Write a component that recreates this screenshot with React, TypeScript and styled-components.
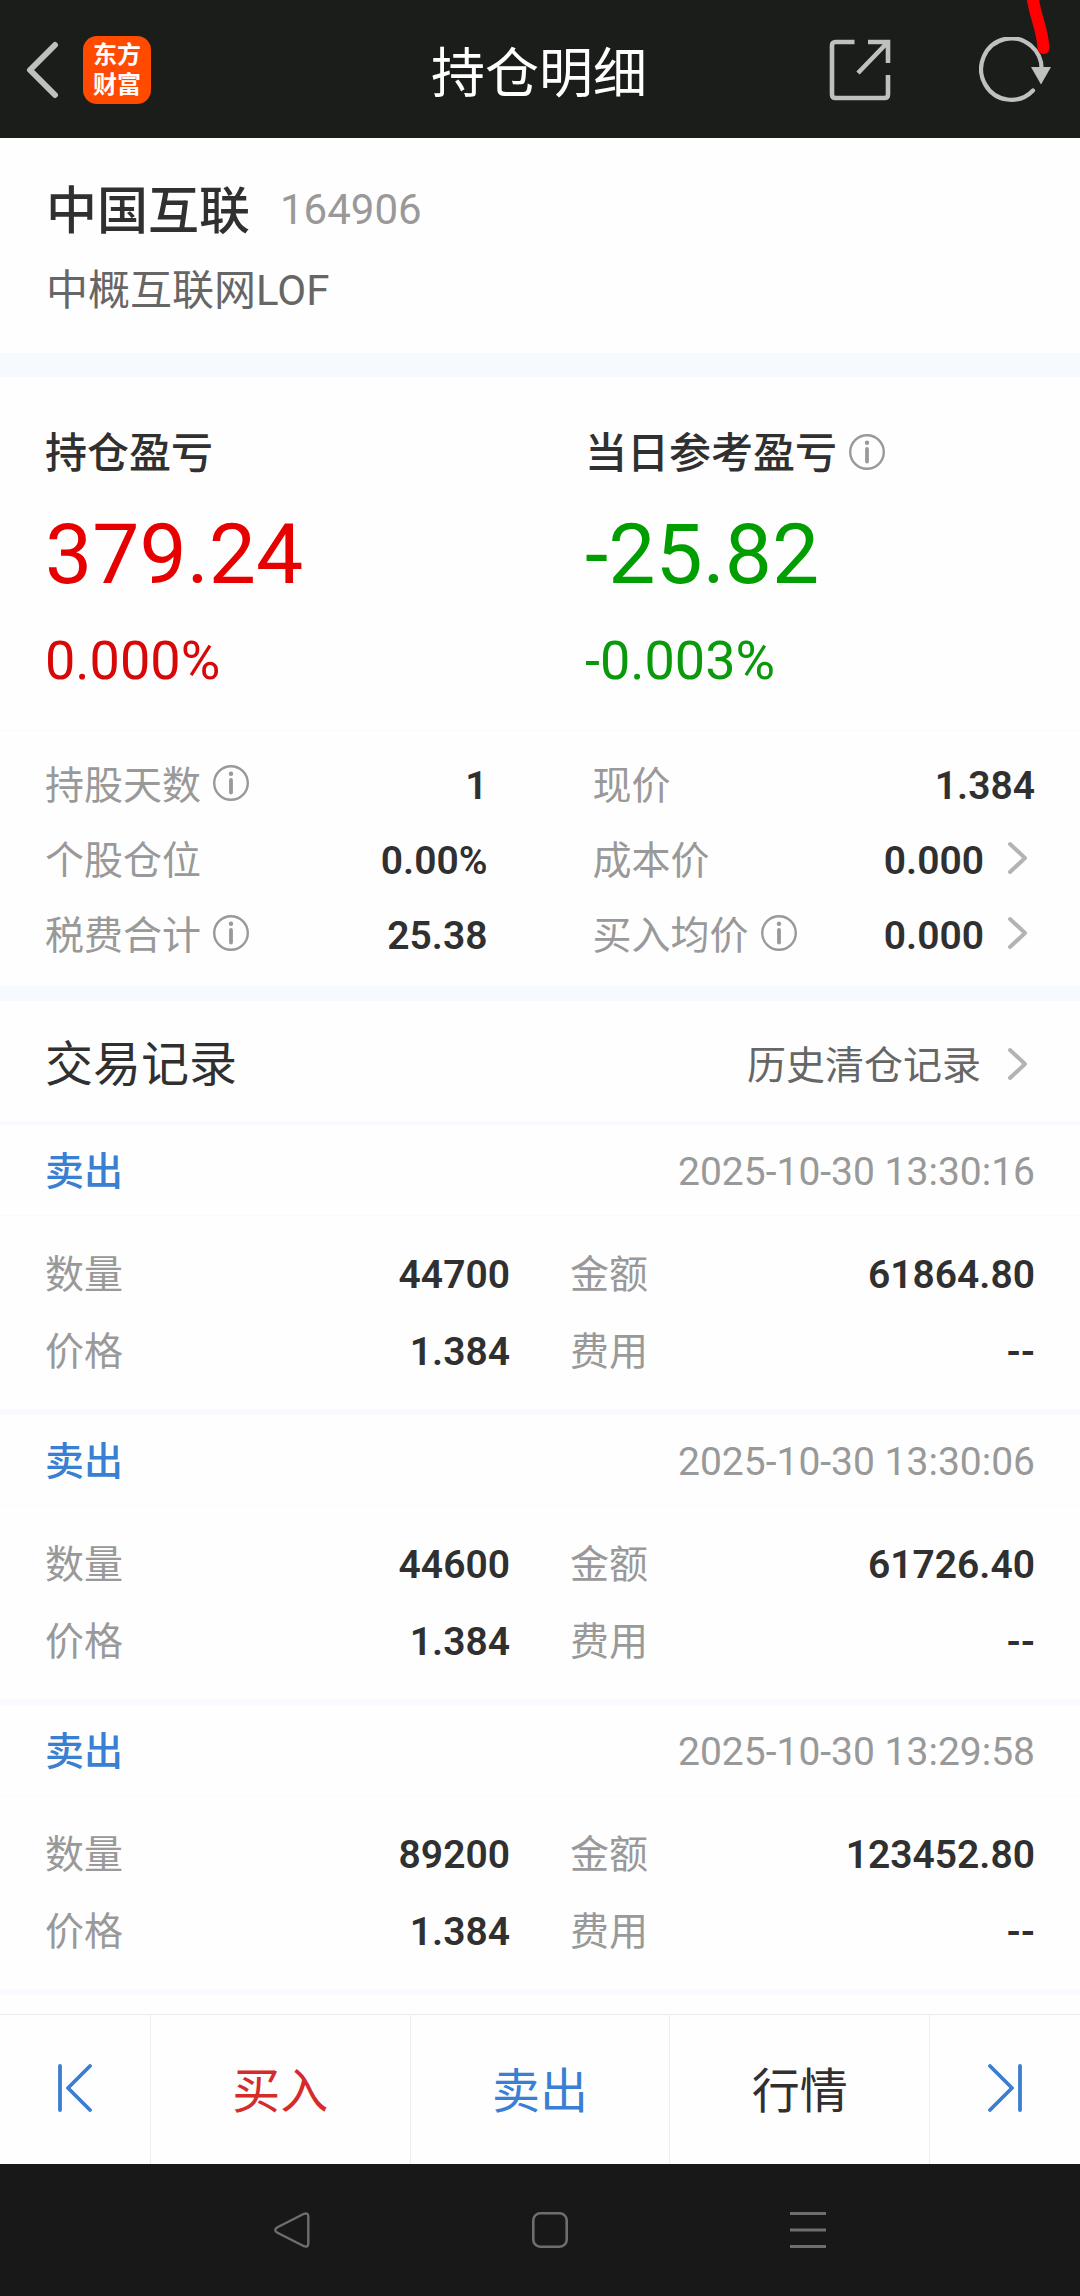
import React from "react";
import styled, { createGlobalStyle } from "styled-components";

const GlobalStyle = createGlobalStyle`
  * { box-sizing: border-box; }
  body {
    margin: 0;
    background: #fefefe;
    color: #303030;
    font-family: Roboto, "Noto Sans CJK SC", sans-serif;
    font-size: 39px;
    line-height: 60px;
  }
  h1, h2, p, dl, dd, dt { margin: 0; font-weight: 400; }
  svg { display: block; flex: none; }
`;

const Page = styled.div`
  min-height: 100vh;
  display: flex;
  flex-direction: column;
`;

const PlainButton = styled.button`
  display: flex;
  align-items: center;
  justify-content: center;
  padding: 0;
  border: 0;
  background: none;
  color: inherit;
  font: inherit;
  cursor: pointer;
`;

/* Top bar */

const TopBar = styled.header`
  position: relative;
  display: grid;
  grid-template-columns: 1fr auto 1fr;
  align-items: center;
  height: 138px;
  padding: 2px 28px 0 26px;
  background: #1a1d1a;
  color: #c0c0c0;
`;

const BarSide = styled.div<{ $end?: boolean }>`
  display: flex;
  align-items: center;
  justify-content: ${(p) => (p.$end ? "flex-end" : "flex-start")};
  gap: ${(p) => (p.$end ? "88px" : "24px")};
`;

const BarTitle = styled.h1`
  padding-top: 10px;
  color: #fff;
  font-size: 54px;
  line-height: 72px;
`;

const BrandLogo = styled.div`
  width: 68px;
  height: 68px;
  padding-top: 4px;
  border-radius: 14px;
  background: #ff4a00;
  color: #fff;
  font-size: 24px;
  font-weight: 700;
  line-height: 30px;
  text-align: center;
`;

const PenMark = styled.svg`
  position: absolute;
  top: 0;
  right: 24px;
`;

/* Sections */

const Band = styled.div<{ $size: number; $soft?: boolean }>`
  flex: none;
  height: ${(p) => p.$size}px;
  background: ${(p) => (p.$soft ? "#f9faff" : "#f6faff")};
`;

const HairLine = styled.div`
  height: 1px;
  background: #fafafa;
`;

const Content = styled.main`
  flex: 1;
`;

const Identity = styled.section`
  padding: 38px 46px 32px;
`;

const NameRow = styled.div`
  display: flex;
  align-items: center;
  gap: 30px;
  margin-bottom: 13px;
`;

const FundName = styled.h2`
  && { font-weight: 500; }
  font-size: 51px;
  line-height: 72px;
`;

const FundCode = styled.span`
  padding-bottom: 4px;
  color: #999;
  font-size: 42px;
`;

const FullName = styled.p`
  color: #666;
  font-size: 42px;
`;

const ProfitGrid = styled.section`
  display: grid;
  grid-template-columns: 1fr 1fr;
  column-gap: 90px;
  padding: 47px 45px 39px;
`;

const ProfitTitle = styled.h2`
  && { font-weight: 500; }
  display: flex;
  align-items: center;
  gap: 12px;
  margin-bottom: 23px;
  font-size: 42px;
`;

const ProfitAmount = styled.p<{ $up: boolean }>`
  margin-bottom: 28px;
  color: ${(p) => (p.$up ? "#e60000" : "#009e00")};
  font-size: 84px;
  line-height: 96px;
`;

const ProfitRate = styled.p<{ $up: boolean }>`
  color: ${(p) => (p.$up ? "#d90808" : "#0a990a")};
  font-size: 54px;
`;

const StatGrid = styled.dl`
  display: grid;
  grid-template-columns: 1fr 1fr;
  column-gap: 105px;
  padding: 17px 45px 13px;
`;

const StatRow = styled.div<{ $height: number }>`
  display: flex;
  align-items: center;
  justify-content: space-between;
  height: ${(p) => p.$height}px;
`;

const Label = styled.dt`
  display: flex;
  align-items: center;
  gap: 12px;
  color: #999;
`;

const Value = styled.dd`
  display: flex;
  align-items: center;
  gap: 15px;
  && { font-weight: 600; }
`;

const IconButton = styled(PlainButton)`
  height: 36px;
  margin-bottom: 5px;
  color: #999;
`;

const RecordsHead = styled.div`
  display: flex;
  align-items: center;
  justify-content: space-between;
  height: 120px;
  padding: 7px 45px 0;
`;

const RecordsTitle = styled.h2`
  font-size: 48px;
`;

const HistoryLink = styled.a`
  display: flex;
  align-items: center;
  gap: 18px;
  padding-top: 3px;
  color: #666;
  text-decoration: none;

  svg { margin-bottom: 5px; }
`;

const RecordHead = styled.div`
  display: flex;
  align-items: center;
  justify-content: space-between;
  height: 90px;
  padding: 4px 45px 0;
`;

const Side = styled.span`
  color: #397fd3;
  font-weight: 500;
`;

const Time = styled.time`
  color: #999;
`;

const RecordGrid = styled.dl`
  display: grid;
  grid-template-columns: 1fr 1fr;
  column-gap: 60px;
  padding: 20px 45px 19px;
`;

/* Bottom bars */

const ActionBar = styled.nav`
  display: grid;
  grid-template-columns: 151px 1fr 1fr 1fr 150px;
  height: 150px;
  border-top: 1px solid #ebebeb;
`;

const Action = styled(PlainButton)<{ $color: string }>`
  padding-top: 5px;
  border-right: 1px solid #ededed;
  color: ${(p) => p.$color};
  font-size: 48px;

  &:last-child { border-right: 0; }
  svg { margin-bottom: 9px; }
`;

const SystemBar = styled.div`
  display: flex;
  align-items: center;
  justify-content: center;
  gap: 222px;
  height: 132px;
  padding-left: 20px;
  background: #181818;
  color: #6e6e6e;
`;

const InfoIcon = () => (
  <svg width="36" height="36" viewBox="0 0 36 36" fill="none" stroke="currentColor">
    <circle cx="18" cy="18" r="16.8" strokeWidth="2.4" />
    <path d="M18 15v12.5" strokeWidth="3.8" strokeLinecap="round" />
    <circle cx="18" cy="8.8" r="2.2" fill="currentColor" stroke="none" />
  </svg>
);

const Chevron = () => (
  <svg width="36" height="36" viewBox="0 0 36 36" fill="none" stroke="#b3b2b4" strokeWidth="4" strokeLinecap="round" strokeLinejoin="round">
    <path d="M11 4L26 18L11 32" />
  </svg>
);

const Info = ({ about }: { about: string }) => (
  <IconButton type="button" aria-label={`${about}说明`}>
    <InfoIcon />
  </IconButton>
);

type Stat = { label: string; value: string; info?: boolean; more?: boolean };

const stats: Stat[] = [
  { label: "持股天数", value: "1", info: true },
  { label: "现价", value: "1.384" },
  { label: "个股仓位", value: "0.00%" },
  { label: "成本价", value: "0.000", more: true },
  { label: "税费合计", value: "25.38", info: true },
  { label: "买入均价", value: "0.000", info: true, more: true },
];

const records = [
  { time: "2025-10-30 13:30:16", count: "44700", amount: "61864.80", price: "1.384", fee: "--" },
  { time: "2025-10-30 13:30:06", count: "44600", amount: "61726.40", price: "1.384", fee: "--" },
  { time: "2025-10-30 13:29:58", count: "89200", amount: "123452.80", price: "1.384", fee: "--" },
];

const StatItem = ({ stat, height }: { stat: Stat; height: number }) => (
  <StatRow $height={height}>
    <Label>
      {stat.label}
      {stat.info && <Info about={stat.label} />}
    </Label>
    <Value>
      {stat.value}
      {stat.more && (
        <IconButton type="button" aria-label={`${stat.label}详情`}>
          <Chevron />
        </IconButton>
      )}
    </Value>
  </StatRow>
);

export default function App() {
  return (
    <Page>
      <GlobalStyle />
      <TopBar>
        <BarSide>
          <PlainButton type="button" aria-label="返回">
            <svg width="33" height="58" viewBox="0 0 33 58" fill="none" stroke="currentColor" strokeWidth="6" strokeLinecap="round" strokeLinejoin="round">
              <path d="M29 4L4 29L29 54" />
            </svg>
          </PlainButton>
          <BrandLogo>
            东方
            <br />
            财富
          </BrandLogo>
        </BarSide>
        <BarTitle>持仓明细</BarTitle>
        <BarSide $end>
          <PlainButton type="button" aria-label="分享">
            <svg width="62" height="62" viewBox="0 0 62 62" fill="none" stroke="currentColor" strokeWidth="4.6">
              <path d="M25.5 3H6.5Q3 3 3 6.5V55.5Q3 59 6.5 59H55.5Q59 59 59 55.5V36" />
              <path d="M39 3H59V24M58 4L29 34" />
            </svg>
          </PlainButton>
          <PlainButton type="button" aria-label="刷新">
            <svg width="73" height="66" viewBox="0 0 73 66" fill="none" stroke="currentColor" strokeWidth="4.2">
              <path d="M62.5 34A30.2 30.7 0 1 0 54 53.5" strokeLinecap="round" />
              <path d="M52 30H72L62 47.5Z" fill="currentColor" stroke="none" />
            </svg>
          </PlainButton>
        </BarSide>
        <PenMark width="30" height="56" viewBox="0 0 30 56" fill="none" stroke="#ff0000" strokeWidth="12" strokeLinecap="round" aria-hidden="true">
          <path d="M6 -6C9 18 16 26 17.5 48" />
        </PenMark>
      </TopBar>

      <Content>
        <Identity>
          <NameRow>
            <FundName>中国互联</FundName>
            <FundCode>164906</FundCode>
          </NameRow>
          <FullName>中概互联网LOF</FullName>
        </Identity>
        <Band $size={24} />

        <ProfitGrid>
          <div>
            <ProfitTitle>持仓盈亏</ProfitTitle>
            <ProfitAmount $up>379.24</ProfitAmount>
            <ProfitRate $up>0.000%</ProfitRate>
          </div>
          <div>
            <ProfitTitle>
              当日参考盈亏
              <Info about="当日参考盈亏" />
            </ProfitTitle>
            <ProfitAmount $up={false}>-25.82</ProfitAmount>
            <ProfitRate $up={false}>-0.003%</ProfitRate>
          </div>
        </ProfitGrid>
        <HairLine />
        <StatGrid>
          {stats.map((s) => (
            <StatItem key={s.label} stat={s} height={75} />
          ))}
        </StatGrid>
        <Band $size={15} />

        <RecordsHead>
          <RecordsTitle>交易记录</RecordsTitle>
          <HistoryLink href="#history">
            历史清仓记录
            <Chevron />
          </HistoryLink>
        </RecordsHead>
        <Band $size={4} $soft />
        {records.map((r) => (
          <article key={r.time}>
            <RecordHead>
              <Side>卖出</Side>
              <Time>{r.time}</Time>
            </RecordHead>
            <HairLine />
            <RecordGrid>
              <StatItem height={77} stat={{ label: "数量", value: r.count }} />
              <StatItem height={77} stat={{ label: "金额", value: r.amount }} />
              <StatItem height={77} stat={{ label: "价格", value: r.price }} />
              <StatItem height={77} stat={{ label: "费用", value: r.fee }} />
            </RecordGrid>
            <Band $size={6} $soft />
          </article>
        ))}
      </Content>

      <ActionBar>
        <Action type="button" $color="#3c7fd0" aria-label="上一个">
          <svg width="34" height="48" viewBox="0 0 34 48" fill="none" stroke="currentColor" strokeWidth="3.8" strokeLinecap="round" strokeLinejoin="round">
            <path d="M2 2V46M32 2L10 24L32 46" />
          </svg>
        </Action>
        <Action type="button" $color="#d62b2b">买入</Action>
        <Action type="button" $color="#397fd3">卖出</Action>
        <Action type="button" $color="#303030">行情</Action>
        <Action type="button" $color="#3c7fd0" aria-label="下一个">
          <svg width="34" height="48" viewBox="0 0 34 48" fill="none" stroke="currentColor" strokeWidth="3.8" strokeLinecap="round" strokeLinejoin="round">
            <path d="M32 2V46M2 2L24 24L2 46" />
          </svg>
        </Action>
      </ActionBar>

      <SystemBar>
        <PlainButton type="button" aria-label="系统返回">
          <svg width="36" height="36" viewBox="0 0 36 36" fill="none" stroke="currentColor" strokeWidth="2.4" strokeLinejoin="round">
            <path d="M30 1.8L3 15.5Q-0.5 18 3 20.5L30 34.2Q34.3 35.5 34.3 31.5V4.5Q34.3 0.5 30 1.8Z" />
          </svg>
        </PlainButton>
        <PlainButton type="button" aria-label="主屏幕">
          <svg width="36" height="36" viewBox="0 0 36 36" fill="none" stroke="currentColor" strokeWidth="2.6">
            <rect x="1.3" y="1.3" width="33.4" height="33.4" rx="7" />
          </svg>
        </PlainButton>
        <PlainButton type="button" aria-label="最近任务">
          <svg width="36" height="36" viewBox="0 0 36 36" fill="none" stroke="currentColor" strokeWidth="3">
            <path d="M0 1.5H36M0 18H36M0 34.5H36" />
          </svg>
        </PlainButton>
      </SystemBar>
    </Page>
  );
}
